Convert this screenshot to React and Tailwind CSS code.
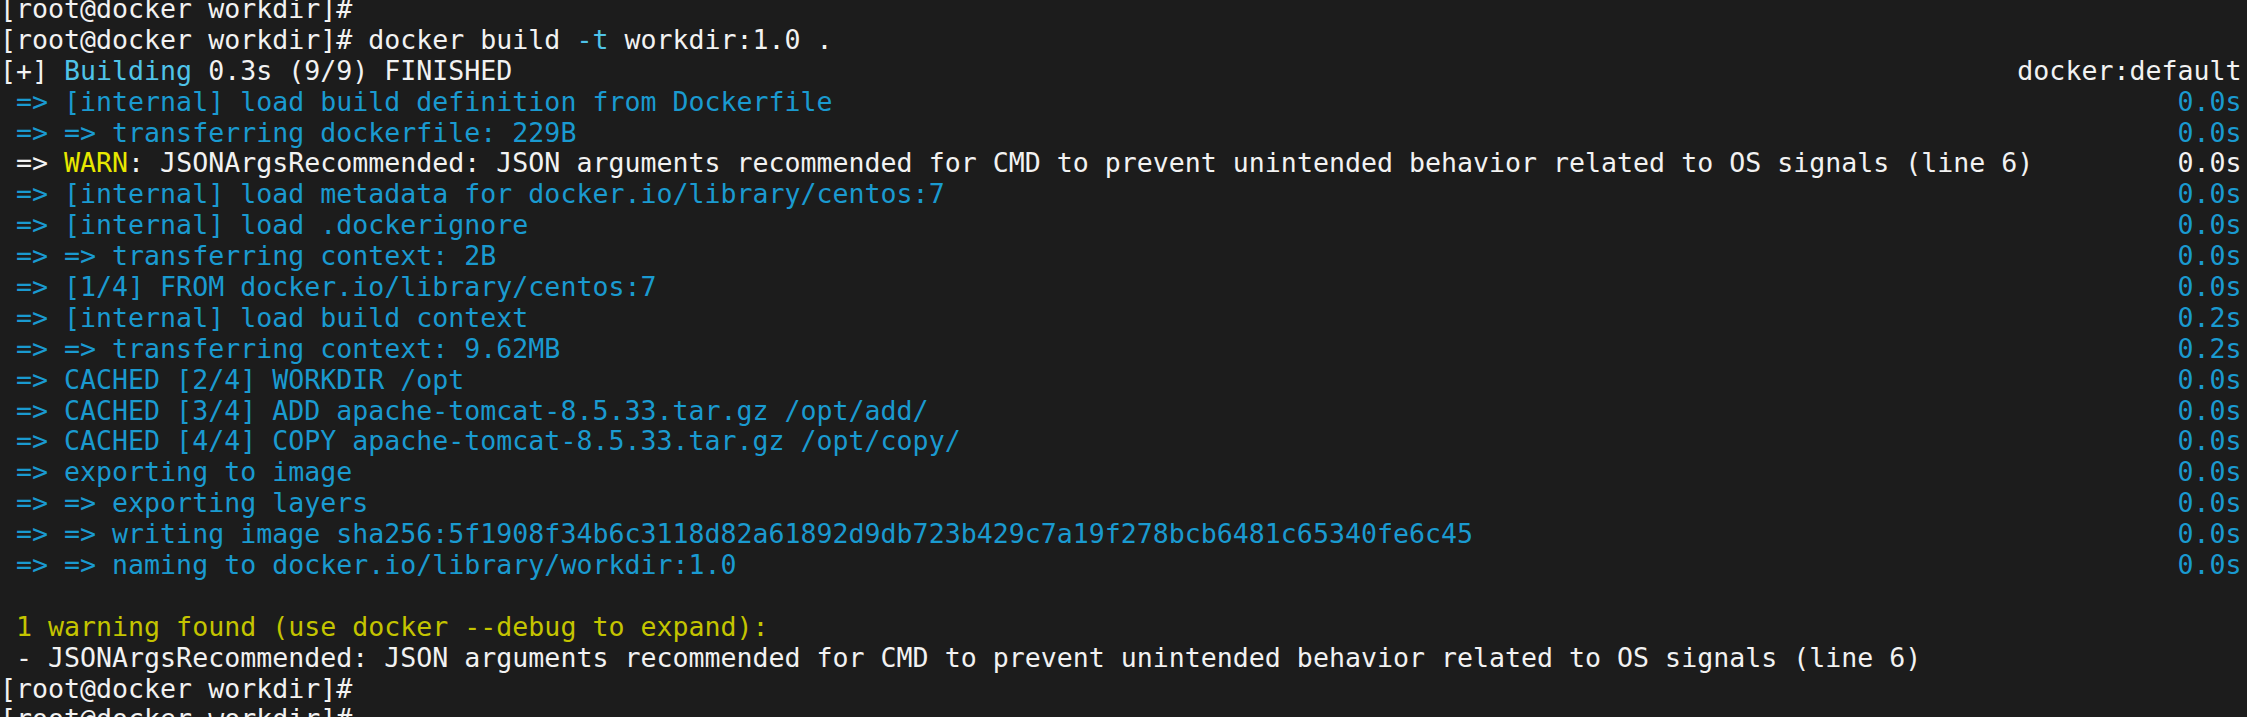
const BLUE = "text-[#1a9ad0]";

const steps = [
  [" => [internal] load build definition from Dockerfile", "0.0s"],
  [" => => transferring dockerfile: 229B", "0.0s"],
  null,
  [" => [internal] load metadata for docker.io/library/centos:7", "0.0s"],
  [" => [internal] load .dockerignore", "0.0s"],
  [" => => transferring context: 2B", "0.0s"],
  [" => [1/4] FROM docker.io/library/centos:7", "0.0s"],
  [" => [internal] load build context", "0.2s"],
  [" => => transferring context: 9.62MB", "0.2s"],
  [" => CACHED [2/4] WORKDIR /opt", "0.0s"],
  [" => CACHED [3/4] ADD apache-tomcat-8.5.33.tar.gz /opt/add/", "0.0s"],
  [" => CACHED [4/4] COPY apache-tomcat-8.5.33.tar.gz /opt/copy/", "0.0s"],
  [" => exporting to image", "0.0s"],
  [" => => exporting layers", "0.0s"],
  [" => => writing image sha256:5f1908f34b6c3118d82a61892d9db723b429c7a19f278bcb6481c65340fe6c45", "0.0s"],
  [" => => naming to docker.io/library/workdir:1.0", "0.0s"],
];

function Line({left, right, className = ""}) {
  return (
    <div className={`flex justify-between h-[30.9px] ${className}`}>
      <span>{left}</span>
      {right && <span>{right}</span>}
    </div>
  );
}

export default function App() {
  return (
    <div className="min-h-screen bg-[#1c1c1c] overflow-hidden">
      <div
        className="w-[140ch] text-[26.6px] leading-[30.9px] whitespace-pre text-[#f2f2f2] -mt-[6px]"
        style={{fontFamily: '"DejaVu Sans Mono", monospace'}}
      >
        <Line left="[root@docker workdir]#" />
        <Line
          left={
            <>
              [root@docker workdir]# docker build <span className="text-[#4fc3e8]">-t</span> workdir:1.0 .
            </>
          }
        />
        <Line
          left={
            <>
              [+] <span className="text-[#4fc3e8]">Building</span> 0.3s (9/9) FINISHED
            </>
          }
          right="docker:default"
        />
        {steps.map((s, i) =>
          s ? (
            <Line key={i} left={s[0]} right={s[1]} className={BLUE} />
          ) : (
            <Line
              key={i}
              left={
                <>
                  {" => "}
                  <span className="text-[#e8e800]">WARN</span>
                  : JSONArgsRecommended: JSON arguments recommended for CMD to prevent unintended behavior related to OS signals (line 6)
                </>
              }
              right="0.0s"
            />
          )
        )}
        <Line left=" " />
        <Line left=" 1 warning found (use docker --debug to expand):" className="text-[#c4c400]" />
        <Line left=" - JSONArgsRecommended: JSON arguments recommended for CMD to prevent unintended behavior related to OS signals (line 6)" />
        <Line left="[root@docker workdir]#" />
        <Line left="[root@docker workdir]#" />
      </div>
    </div>
  );
}
